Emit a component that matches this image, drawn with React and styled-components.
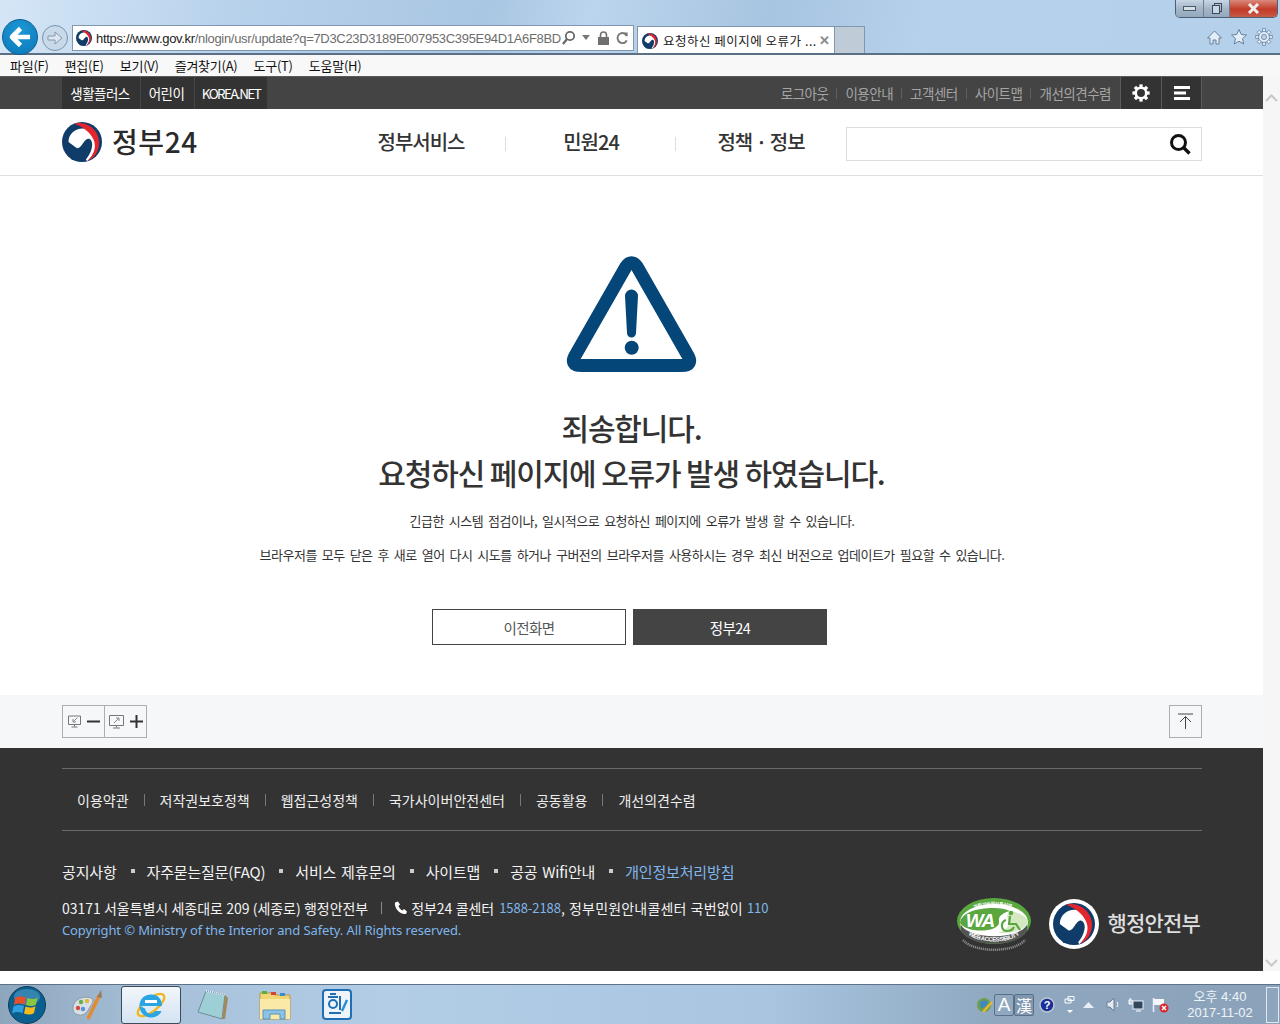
import React from 'react';
import styled, { createGlobalStyle } from 'styled-components';

const Global = createGlobalStyle`
  html, body { margin: 0; padding: 0; background: #fff; overflow: hidden; }
  #root { width: 1280px; height: 1024px; }
  * { box-sizing: border-box; }
  svg { flex: none; display: block; }
`;
const KR = `"Noto Sans CJK KR", "Noto Sans", sans-serif`;
const Shell = styled.div`width:1280px;height:1024px;display:flex;flex-direction:column;font-family:${KR};background:#fff;overflow:hidden;`;

const Chrome = styled.div`
  height:55px;flex:none;position:relative;display:flex;align-items:flex-end;padding:0 0 0 2px;
  background:linear-gradient(100deg,#d5e6f6 0%,#b8d2ec 18%,#a9c6e2 38%,#bcd5ee 46%,#a7c4e0 60%,#b6d1ec 72%,#b5d0eb 100%);
  border-bottom:2px solid #5b6f85;
`;
const BackBtn = styled.div`width:36px;height:36px;border-radius:50%;background:radial-gradient(circle at 50% 30%,#1e97d6,#0a78b8);border:1px solid #0a5f92;display:flex;align-items:center;justify-content:center;margin-bottom:-2px;`;
const ForwardBtn = styled.div`width:26px;height:26px;border-radius:50%;border:1px solid #7c93ab;background:#c8d9ea;display:flex;align-items:center;justify-content:center;margin:0 4px 2px 4px;`;
const AddressBar = styled.div`width:562px;height:26px;background:#fff;border:1px solid #8097ae;display:flex;align-items:center;padding:0 4px 0 3px;margin-bottom:2px;font-family:"Liberation Sans",sans-serif;font-size:13px;white-space:nowrap;`;
const UrlHost = styled.span`color:#222;margin-left:4px;letter-spacing:-.32px;`;
const UrlRest = styled.span`color:#6d6d6d;letter-spacing:-.32px;`;
const AddrIcons = styled.div`margin-left:auto;display:flex;align-items:center;gap:6px;`;
const Tab = styled.div`margin-left:3px;width:198px;height:27px;background:#fff;border:1px solid #8097ae;border-bottom:none;display:flex;align-items:center;padding:1px 4px 0 4px;font-size:12.5px;color:#222;white-space:nowrap;letter-spacing:.5px;`;
const TabLabel = styled.span`margin-left:5px;flex:1;`;
const TabClose = styled.span`color:#8a8a8a;font-weight:700;font-size:13px;font-family:"Liberation Sans",sans-serif;`;
const NewTab = styled.div`width:30px;height:27px;background:#c0cbd8;border:1px solid #8097ae;border-left:none;border-bottom:none;`;
const WinButtons = styled.div`position:absolute;top:0;right:2px;width:103px;height:18px;display:flex;border:1px solid #4d5f73;border-top:none;border-radius:0 0 5px 5px;overflow:hidden;`;
const WinBtn = styled.div`flex:${p=>p.$w};display:flex;align-items:center;justify-content:center;background:${p=>p.$red?'linear-gradient(#d98a7c,#c33a28 55%,#c65a48)':'linear-gradient(#c8d6e5,#a5b6c8 50%,#94a8bd)'};border-right:${p=>p.$red?'none':'1px solid #6a7d92'};`;
const ToolIcons = styled.div`position:absolute;right:7px;bottom:7px;display:flex;gap:7px;align-items:center;`;

const MenuBar = styled.div`height:21px;flex:none;background:#f8f8f8;display:flex;align-items:center;padding-left:10px;gap:16px;font-size:13px;color:#111;letter-spacing:-.25px;`;
const PageWrap = styled.div`flex:none;height:895px;display:flex;`;
const Page = styled.div`width:1263px;height:895px;display:flex;flex-direction:column;background:#fff;`;
const Scrollbar = styled.div`width:17px;background:#f6f6f6;display:flex;flex-direction:column;justify-content:space-between;align-items:center;padding:18px 0 4px;`;
const BottomStrip = styled.div`height:13px;flex:none;background:#fff;`;

const TopBar = styled.div`height:33px;flex:none;background:#444;border-top:1px solid #5a5a5a;display:flex;padding:0 61px 0 62px;`;
const FamilyNav = styled.div`display:flex;background:#333;`;
const FamilyItem = styled.a`width:${p=>p.$w}px;height:32px;display:flex;align-items:center;justify-content:center;padding-right:${p=>p.$tight?0:2}px;color:#fff;font-size:13.5px;letter-spacing:${p=>p.$tight?'-1.6px':'-.55px'};border-left:${p=>p.$first?'none':'1px solid #474747'};`;
const UtilNav = styled.div`margin-left:auto;display:flex;align-items:center;padding-right:9px;`;
const UtilLink = styled.a`color:#a4a4a4;font-size:13.5px;letter-spacing:-.5px;white-space:nowrap;display:flex;align-items:center;&+&::before{content:"";display:block;width:1px;height:11px;background:#5f5f5f;margin:0 8px;}`;
const IconCell = styled.div`width:41px;height:32px;background:#333;display:flex;align-items:center;justify-content:center;border-left:1px solid #5c5c5c;&:last-child{border-right:1px solid #5c5c5c;}`;

const Header = styled.div`height:67px;flex:none;display:flex;align-items:center;padding:0 61px 0 62px;border-bottom:1px solid #dfdfdf;`;
const Logo = styled.div`display:flex;align-items:center;width:274px;`;
const LogoText = styled.span`margin:-2px 0 0 10px;font-size:28px;font-weight:500;color:#2a2a2a;letter-spacing:.6px;line-height:1;`;
const GNav = styled.nav`display:flex;width:510px;margin-top:-2px;`;
const GNavItem = styled.a`flex:none;width:170px;display:flex;justify-content:center;font-size:20px;color:#333;letter-spacing:-1px;font-weight:500;position:relative;white-space:nowrap;&:not(:last-child)::after{content:"";position:absolute;right:0;top:10px;height:14px;width:1px;background:#ddd;}`;
const SearchBox = styled.div`margin-left:auto;width:356px;height:34px;border:1px solid #ddd;margin-top:3px;display:flex;align-items:center;justify-content:flex-end;padding-right:10px;`;

const Main = styled.main`height:519px;flex:none;display:flex;flex-direction:column;align-items:center;padding-top:80px;`;
const Title = styled.h1`margin:32px 0 0;text-align:center;font-size:30px;line-height:45px;font-weight:500;color:#333;letter-spacing:-1.15px;`;
const Desc = styled.p`margin:${p=>p.$mt}px 0 0 1px;font-size:13px;line-height:20px;color:#333;letter-spacing:-.5px;word-spacing:2.5px;white-space:nowrap;`;
const Buttons = styled.div`display:flex;gap:7px;margin:44px 4px 0 0;`;
const Btn = styled.a`width:194px;height:36px;display:flex;align-items:center;justify-content:center;font-size:14.5px;letter-spacing:-.6px;color:${p=>p.$dark?'#fff':'#555'};background:${p=>p.$dark?'#444':'#fff'};border:1px solid #444;`;

const ZoomRow = styled.div`height:53px;flex:none;background:#f6f7f9;padding:10px 61px 0 62px;display:flex;justify-content:space-between;align-items:flex-start;`;
const ZoomBox = styled.div`display:flex;width:85px;height:33px;border:1px solid #aeaeae;`;
const ZoomBtn = styled.div`flex:1;display:flex;align-items:center;justify-content:center;gap:6px;&+&{border-left:1px solid #aeaeae;}`;
const TopBtn = styled.div`width:33px;height:33px;border:1px solid #aeaeae;display:flex;align-items:center;justify-content:center;`;

const Footer = styled.footer`flex:1;background:#333;padding:20px 61px 0 62px;color:#fff;`;
const FootLinks = styled.div`height:63px;border-top:1px solid #6a6a6a;border-bottom:1px solid #6a6a6a;display:flex;align-items:center;padding-left:15px;`;
const FootLink = styled.a`font-size:14px;color:#eee;letter-spacing:0;white-space:nowrap;display:flex;align-items:center;&:not(:first-child)::before{content:"";display:inline-block;width:1px;height:12px;background:#777;margin:0 15px;}`;
const SubLinks = styled.div`display:flex;align-items:center;margin-top:28px;height:24px;font-size:15px;`;
const SubLink = styled.a`color:${p=>p.$blue?'#7fb6ec':'#f2f2f2'};letter-spacing:-.17px;word-spacing:1.7px;white-space:nowrap;display:flex;align-items:center;&:not(:first-child)::before{content:"";display:inline-block;width:4px;height:4px;background:#ccc;margin:0 12px 0 14px;}`;
const FootBottom = styled.div`display:flex;justify-content:space-between;`;
const Address = styled.div`font-size:14px;line-height:22px;color:#f2f2f2;padding-top:14px;white-space:nowrap;`;
const Line = styled.div`display:flex;align-items:center;letter-spacing:-.05px;word-spacing:.3px;`;
const Bar = styled.span`display:inline-block;width:1px;height:12px;background:#888;margin:0 12px 0 13px;`;
const CallText = styled.span`margin-left:3px;`;
const CenterText = styled.span`letter-spacing:.2px;word-spacing:.6px;`;
const Blue = styled.span`color:#7fb6ec;font-size:13px;margin-left:${p=>p.$ml}px;`;
const CopyLine = styled.div`color:#7fb6ec;letter-spacing:-.11px;font-family:"Noto Sans","Noto Sans CJK KR",sans-serif;font-size:13px;`;
const Marks = styled.div`display:flex;align-items:center;align-self:flex-start;margin-top:13px;padding-right:2px;`;
const MoisText = styled.span`font-size:21px;font-weight:500;color:#ddd;margin:-4px 0 0 8px;letter-spacing:-.8px;`;
const WAWrap = styled.div`margin-right:17px;margin-top:2px;`;

const Taskbar = styled.div`height:40px;flex:none;position:relative;display:flex;align-items:center;gap:2px;border-top:1px solid #5f7388;background:linear-gradient(90deg,#8ea6bc 0%,#a6c0d9 12%,#b3cde6 30%,#a9c5e0 60%,#8fa8c0 78%,#8aa2b9 100%);`;
const Start = styled.div`width:44px;display:flex;justify-content:center;margin:0 7px 0 5px;`;
const TaskIcon = styled.div`width:60px;height:38px;display:flex;align-items:center;justify-content:center;${p=>p.$active?'background:linear-gradient(#f2f6fb,#d4e3f2);border:1px solid #3d4a57;border-radius:3px;margin-left:1px;':''}`;
const Tray = styled.div`margin-left:auto;display:flex;align-items:center;height:100%;`;
const Clock = styled.div`width:92px;margin-left:5px;text-align:center;color:#eef3f8;font-size:13px;line-height:16px;font-family:"Liberation Sans","Noto Sans CJK KR",sans-serif;`;
const ShowDesk = styled.div`width:13px;height:36px;margin-right:1px;border:1px solid #dfe8f1;background:#8ea6bd;`;
const LangBtn = styled.div`width:20px;height:22px;display:flex;align-items:center;justify-content:center;color:#fff;font-size:${p=>p.$s}px;border:1px solid #5b7086;background:${p=>p.$active?'#90a9c0':'#7f98b0'};border-radius:2px;font-family:"Liberation Sans","Noto Sans CJK KR",sans-serif;`;
const TrayIcon = styled.span`display:flex;margin-left:${p=>p.$ml}px;`;

const GovLogo = ({ s = 40, ring }) => (
  <svg width={s} height={s} viewBox="0 0 40 40" aria-hidden="true">
    {ring && <circle cx="20" cy="20" r="20" fill="#fff" />}
    <g transform={ring ? 'translate(3.2 3.2) scale(.84)' : undefined}>
      <circle cx="20" cy="20" r="20" fill="#0f3c68" />
      <path d="M6.500 20 C6.500 12 13 6.500 20.500 6.500 C28 6.500 34.500 12.500 34.500 20 C34.500 28 30.500 34.500 25 39.200 L20 30 Z" fill="#fff" />
      <path d="M12 1.700 A20 20 0 0 1 25.500 39.200 C31.500 33 35 25 31.500 17.500 C28 10 21 4.500 12 1.700Z" fill="#e3262e" />
      <path d="M6.300 21 C8 27 15 28.500 19 24 C22 20 24 15.800 27 16.800 C30 17.800 30.800 22 29.800 26 C28.800 31 26 35 23 38.500 L10 38 L3 28 Z" fill="#0f3c68" />
    </g>
  </svg>
);
const WALogo = () => (
  <svg width="76" height="54" viewBox="0 0 76 54" aria-hidden="true">
    <defs>
      <path id="waTop" d="M12 16 C20 5 56 5 64 16" />
      <path id="waBottom" d="M12 36 C22 46 54 46 64 36" />
    </defs>
    <path d="M7 42 C18 55 58 55 69 42" fill="none" stroke="#8a8a8a" strokeWidth="2.500" strokeDasharray="1.200 .8" />
    <ellipse cx="38" cy="23" rx="37" ry="23" fill="#5aa63f" />
    <ellipse cx="38" cy="24" rx="34" ry="18" fill="#fff" />
    <path d="M4 25 C5 15 20 10 38 10 C44 10 50 11 54 13 C46 15 42 19 43 23 C44 28 38 31 32 32 C20 34 8 31 4 25Z" fill="#5aa63f" />
    <path d="M56 13 C66 16 72 20 72 25 C68 32 56 36 42 35 C52 31 56 25 52 21 C50 17 52 14 56 13Z" fill="#d4e9c2" />
    <path d="M5 27 C14 42 62 42 71 27 L71 33 C62 50 14 50 5 33Z" fill="#555" />
    <text fontFamily="Noto Sans CJK KR" fontSize="5" fontWeight="700" fill="#fff"><textPath href="#waTop" startOffset="14%" textLength="38">과학기술정보통신부</textPath></text>
    <text x="24" y="29" fontFamily="Liberation Sans" fontWeight="700" fontStyle="italic" fontSize="19" fill="#fff" textAnchor="middle" letterSpacing="-1">WA</text>
    <circle cx="55" cy="15" r="2.300" fill="#5aa63f" />
    <path d="M54 18 L53 26 L60 26 L64 32 M50 22 C44 24 45 33 51 33 C55 33 57 31 58 29" fill="none" stroke="#5aa63f" strokeWidth="2.200" />
    <text fontFamily="Liberation Sans" fontSize="6" fontWeight="700" fill="#fff"><textPath href="#waBottom" startOffset="1%" textLength="54">WEB ACCESSIBILITY</textPath></text>
  </svg>
);
const Gear = ({ s = 18, c = '#fff', sw = 3.4 }) => (
  <svg width={s} height={s} viewBox="0 0 24 24" aria-hidden="true">
    <circle cx="12" cy="12" r="7" fill="none" stroke={c} strokeWidth={sw} />
    {[0,45,90,135,180,225,270,315].map(a => <rect key={a} x="9.800" y="0.500" width="4.400" height="4" fill={c} transform={`rotate(${a} 12 12)`} />)}
  </svg>
);

export default function App() {
  return (
    <Shell>
      <Global />
      <Chrome>
        <BackBtn>
          <svg width="24" height="24" viewBox="0 0 24 24" aria-hidden="true"><path d="M22 12H5M12.500 3.500L4 12l8.500 8.500" fill="none" stroke="#fff" strokeWidth="4.600" strokeLinejoin="round" /></svg>
        </BackBtn>
        <ForwardBtn>
          <svg width="18" height="18" viewBox="0 0 18 18" aria-hidden="true"><path d="M2 7h7V3l7 6-7 6v-4H2z" fill="#dce7f2" stroke="#8398ad" /></svg>
        </ForwardBtn>
        <AddressBar>
          <GovLogo s={16} />
          <UrlHost>https://www.gov.kr</UrlHost>
          <UrlRest>/nlogin/usr/update?q=7D3C23D3189E007953C395E94D1A6F8BD</UrlRest>
          <AddrIcons>
            <svg width="15" height="16" viewBox="0 0 15 16" aria-hidden="true"><circle cx="9" cy="6" r="4.200" fill="none" stroke="#666" strokeWidth="1.800" /><path d="M6 9l-4 5" stroke="#666" strokeWidth="2.200" /></svg>
            <svg width="9" height="6" viewBox="0 0 9 6" aria-hidden="true"><path d="M0 0h8L4 5z" fill="#777" /></svg>
            <svg width="13" height="15" viewBox="0 0 13 15" aria-hidden="true"><rect x="1" y="6" width="11" height="8" fill="#6f6f6f" /><path d="M3.500 6V4a3 3 0 016 0v2" fill="none" stroke="#6f6f6f" strokeWidth="1.600" /></svg>
            <svg width="13" height="14" viewBox="0 0 14 14" aria-hidden="true"><path d="M11.500 5A5 5 0 102 8.500a5 5 0 009.500 1" fill="none" stroke="#777" strokeWidth="2" /><path d="M8 1l4.500 0v4.500z" fill="#777" /></svg>
          </AddrIcons>
        </AddressBar>
        <Tab>
          <GovLogo s={16} />
          <TabLabel>요청하신 페이지에 오류가 ...</TabLabel>
          <TabClose>✕</TabClose>
        </Tab>
        <NewTab />
        <WinButtons>
          <WinBtn $w={28}><svg width="13" height="6" viewBox="0 0 13 6" aria-hidden="true"><rect x=".5" y=".5" width="12" height="4" fill="#d6dfe8" stroke="#4b5a69" /></svg></WinBtn>
          <WinBtn $w={26}><svg width="10" height="11" viewBox="0 0 10 11" aria-hidden="true"><rect x="2.500" y=".5" width="7" height="8" fill="none" stroke="#39485a" /><rect x=".5" y="2.500" width="7" height="8" fill="#c8d6e5" stroke="#39485a" /></svg></WinBtn>
          <WinBtn $w={48} $red><svg width="13" height="11" viewBox="0 0 13 11" aria-hidden="true"><path d="M2 1l9 9M11 1l-9 9" stroke="#eee" strokeWidth="3" /></svg></WinBtn>
        </WinButtons>
        <ToolIcons>
          <svg width="17" height="17" viewBox="0 0 17 17" aria-hidden="true"><path d="M8.500 2L1.500 9h2.500v6h3v-4h3v4h3V9h2.500z" fill="#e4eef8" stroke="#66809a" /></svg>
          <svg width="18" height="18" viewBox="0 0 18 18" aria-hidden="true"><path d="M9 1.500l2.300 5 5.200.5-4 3.600 1.200 5.400L9 13.200 4.300 16l1.200-5.400-4-3.600 5.200-.5z" fill="#e4eef8" stroke="#66809a" /></svg>
          <svg width="18" height="18" viewBox="0 0 24 24" aria-hidden="true">
            <circle cx="12" cy="12" r="7.500" fill="#e4eef8" stroke="#66809a" />
            <circle cx="12" cy="12" r="3.500" fill="#b5d0eb" stroke="#66809a" />
            {[0,45,90,135,180,225,270,315].map(a => <rect key={a} x="10" y="1" width="4" height="4" fill="#e4eef8" stroke="#66809a" transform={`rotate(${a} 12 12)`} />)}
          </svg>
        </ToolIcons>
      </Chrome>
      <MenuBar>
        {['파일(F)','편집(E)','보기(V)','즐겨찾기(A)','도구(T)','도움말(H)'].map(m => <span key={m}>{m}</span>)}
      </MenuBar>
      <PageWrap>
        <Page>
          <TopBar>
            <FamilyNav>
              <FamilyItem $first $w={78}>생활플러스</FamilyItem>
              <FamilyItem $w={54}>어린이</FamilyItem>
              <FamilyItem $w={73} $tight>KOREA.NET</FamilyItem>
            </FamilyNav>
            <UtilNav>
              {['로그아웃','이용안내','고객센터','사이트맵','개선의견수렴'].map(t => <UtilLink key={t}>{t}</UtilLink>)}
            </UtilNav>
            <IconCell><Gear /></IconCell>
            <IconCell>
              <svg width="16" height="14" viewBox="0 0 16 14" aria-hidden="true"><path d="M0 0h16v3H0zM0 5.500h12v3H0zM0 11h16v3H0z" fill="#fff" /></svg>
            </IconCell>
          </TopBar>
          <Header>
            <Logo>
              <GovLogo s={40} />
              <LogoText>정부24</LogoText>
            </Logo>
            <GNav>
              <GNavItem>정부서비스</GNavItem>
              <GNavItem>민원24</GNavItem>
              <GNavItem>정책 · 정보</GNavItem>
            </GNav>
            <SearchBox>
              <svg width="22" height="22" viewBox="0 0 22 22" aria-hidden="true"><circle cx="9.500" cy="9.500" r="7" fill="none" stroke="#111" strokeWidth="3" /><path d="M14.500 14.500l6 6" stroke="#111" strokeWidth="3.400" /></svg>
            </SearchBox>
          </Header>
          <Main>
            <svg width="131" height="117" viewBox="0 0 131 117" aria-hidden="true">
              <path d="M60 10.500 Q65.500 3 71 10.500 L121 98 Q128.500 109.600 115 109.600 H16 Q2.500 109.600 10 98 Z" fill="none" stroke="#044677" strokeWidth="13" strokeLinejoin="round" />
              <path d="M59 40 a6.500 6.500 0 0113 0 L70 77 a4.500 4.500 0 01-9 0z" fill="#044677" />
              <circle cx="65.700" cy="91.700" r="7" fill="#044677" />
            </svg>
            <Title>죄송합니다.<br />요청하신 페이지에 오류가 발생 하였습니다.</Title>
            <Desc $mt={16}>긴급한 시스템 점검이나, 일시적으로 요청하신 페이지에 오류가 발생 할 수 있습니다.</Desc>
            <Desc $mt={14}>브라우저를 모두 닫은 후 새로 열어 다시 시도를 하거나 구버전의 브라우저를 사용하시는 경우 최신 버전으로 업데이트가 필요할 수 있습니다.</Desc>
            <Buttons>
              <Btn>이전화면</Btn>
              <Btn $dark>정부24</Btn>
            </Buttons>
          </Main>
          <ZoomRow>
            <ZoomBox>
              <ZoomBtn>
                <svg width="13" height="13" viewBox="0 0 13 13" aria-hidden="true"><path d="M.5 1h12v8.500H.5zM6.500 9.500v2M3.500 12h6" fill="none" stroke="#777" /><path d="M9.500 2.500L5 7M5 4v3h3" fill="none" stroke="#888" /></svg>
                <svg width="13" height="3" viewBox="0 0 13 3" aria-hidden="true"><rect width="13" height="2" y=".5" fill="#333" /></svg>
              </ZoomBtn>
              <ZoomBtn>
                <svg width="15" height="14" viewBox="0 0 15 14" aria-hidden="true"><path d="M.5 .5h14v10H.5zM7.500 10.500v2M4 13h7" fill="none" stroke="#777" /><path d="M5 8l5-5M7 3h3v3" fill="none" stroke="#888" /></svg>
                <svg width="13" height="13" viewBox="0 0 13 13" aria-hidden="true"><path d="M0 5.500h13v2H0zM5.500 0h2v13h-2z" fill="#333" /></svg>
              </ZoomBtn>
            </ZoomBox>
            <TopBtn>
              <svg width="17" height="17" viewBox="0 0 17 17" aria-hidden="true"><path d="M1 1h15M8.500 16V3.500M3 9l5.500-5.500L14 9" fill="none" stroke="#444" /></svg>
            </TopBtn>
          </ZoomRow>
          <Footer>
            <FootLinks>
              {['이용약관','저작권보호정책','웹접근성정책','국가사이버안전센터','공동활용','개선의견수렴'].map(t => <FootLink key={t}>{t}</FootLink>)}
            </FootLinks>
            <SubLinks>
              <SubLink>공지사항</SubLink>
              <SubLink>자주묻는질문(FAQ)</SubLink>
              <SubLink>서비스 제휴문의</SubLink>
              <SubLink>사이트맵</SubLink>
              <SubLink>공공 Wifi안내</SubLink>
              <SubLink $blue>개인정보처리방침</SubLink>
            </SubLinks>
            <FootBottom>
              <Address>
                <Line>
                  <span>03171 서울특별시 세종대로 209 (세종로) 행정안전부</span>
                  <Bar />
                  <svg width="14" height="14" viewBox="0 0 14 14" aria-hidden="true"><path d="M1 1.500l3-1 2 3-1.500 1.500c.5 1.800 2 3.600 4 4.500L10 8l3 2.500-1 2.500C6 14 0 7 1 1.500z" fill="#fff" /></svg>
                  <CallText>정부24 콜센터</CallText>
                  <Blue $ml={5}>1588-2188</Blue>
                  <CenterText>, 정부민원안내콜센터 국번없이</CenterText>
                  <Blue $ml={4}>110</Blue>
                </Line>
                <CopyLine>Copyright © Ministry of the Interior and Safety. All Rights reserved.</CopyLine>
              </Address>
              <Marks>
                <WAWrap><WALogo /></WAWrap>
                <GovLogo s={50} ring />
                <MoisText>행정안전부</MoisText>
              </Marks>
            </FootBottom>
          </Footer>
        </Page>
        <Scrollbar>
          <svg width="13" height="8" viewBox="0 0 13 8" aria-hidden="true"><path d="M1 7l5.500-5.500L12 7" fill="none" stroke="#c8c8c8" strokeWidth="2" /></svg>
          <svg width="13" height="8" viewBox="0 0 13 8" aria-hidden="true"><path d="M1 1l5.500 5.500L12 1" fill="none" stroke="#c8c8c8" strokeWidth="2" /></svg>
        </Scrollbar>
      </PageWrap>
      <BottomStrip />
      <Taskbar>
        <Start>
          <svg width="38" height="38" viewBox="0 0 38 38" aria-hidden="true">
            <circle cx="19" cy="19" r="18.500" fill="#0b5f8f" stroke="#123c5a" />
            <ellipse cx="19" cy="11" rx="13" ry="8" fill="#5fa8cf" opacity=".5" />
            <path d="M7 12c3-2 7-2 11-.5l-1.500 7c-4-1.500-7.500-1.500-10.500.5z" fill="#e5502b" />
            <path d="M19.500 12c4 1.500 7 1.500 10-.5l-1.500 7c-3 2-6.500 2-10 .5z" fill="#8cc63f" />
            <path d="M5.500 20.500c3-2 7-2 10.500-.5l-1.500 7c-4-1.500-7.500-1.500-10.500.5z" fill="#2f9fe0" />
            <path d="M17.500 20.500c3.500 1.500 7 1.500 10-.5L26 27c-3 2-6.500 2-10 .5z" fill="#f6b91c" />
          </svg>
        </Start>
        <TaskIcon>
          <svg width="34" height="34" viewBox="0 0 34 34" aria-hidden="true"><path d="M2 20c0-8 10-13 18-10 4 2 1 6-1 9-3 6-7 9-11 8-4-1-6-3-6-7z" fill="#d8e0e6" stroke="#8d9aa8" /><circle cx="7" cy="20" r="2.200" fill="#d9483b" /><circle cx="10" cy="14" r="2.200" fill="#62b04a" /><circle cx="16" cy="13" r="2.200" fill="#e5b73b" /><circle cx="12" cy="21" r="2.200" fill="#5a93d8" /><path d="M17 31L28 8" stroke="#e58a2c" strokeWidth="3.400" /><path d="M26 9l4-7 1 8z" fill="#9a7a5a" /></svg>
        </TaskIcon>
        <TaskIcon $active>
          <svg width="34" height="34" viewBox="0 0 34 34" aria-hidden="true"><ellipse cx="17" cy="17" rx="16" ry="6.500" transform="rotate(-38 17 17)" fill="none" stroke="#f0b81f" strokeWidth="2.400" /><path d="M6 18h22c0-7-4-11.500-11-11.500S5 12 5.500 18.500C6 25 11 29.500 17 29.500c5 0 9-2.500 10.500-6.500h-6.500c-1 1.500-2.500 2.500-4.500 2.500-3 0-5-2-5.500-5z" fill="#2aa5e3" /><rect x="11" y="12" width="12" height="3" fill="#fff" /></svg>
        </TaskIcon>
        <TaskIcon>
          <svg width="34" height="34" viewBox="0 0 34 34" aria-hidden="true"><path d="M10 3l19 4-3 24L2 24z" fill="#9fcfd6" stroke="#6c8d95" /><path d="M29 7l3 3-3 21-3 0z" fill="#a08a5d" /><path d="M10 3l19 4" stroke="#eef" strokeWidth="2" strokeDasharray="1 1" /></svg>
        </TaskIcon>
        <TaskIcon>
          <svg width="34" height="33" viewBox="0 0 34 33" aria-hidden="true"><path d="M2 5h13l2 2h15v24H2z" fill="#f2d676" stroke="#b89a45" /><rect x="4" y="3" width="5" height="3" fill="#5cae3e" /><rect x="13" y="4" width="5" height="3" fill="#cf4433" /><rect x="22" y="5" width="5" height="3" fill="#3d8ad2" /><path d="M2 11h30v20H2z" fill="#fbe9a8" /><path d="M5 31V22h22v9h-5v-5H12v5z" fill="#8cc2e6" stroke="#5b93b8" /></svg>
        </TaskIcon>
        <TaskIcon>
          <svg width="30" height="32" viewBox="0 0 30 32" aria-hidden="true"><rect x="1" y="1" width="28" height="29" rx="3" fill="#eef4fa" stroke="#1f6fb5" strokeWidth="2" /><circle cx="11" cy="15" r="4" fill="none" stroke="#1f6fb5" strokeWidth="2" /><path d="M6 8h10M8 5h6M18 7v14M7 24h12" stroke="#1f6fb5" strokeWidth="2" fill="none" /><path d="M20 22l5-11" stroke="#2a8fd6" strokeWidth="2.500" /></svg>
        </TaskIcon>
        <Tray>
          <svg width="18" height="18" viewBox="0 0 18 18" aria-hidden="true"><circle cx="8" cy="9" r="7" fill="#6aa04c" /><path d="M4 6c3-2 6-2 8 0-1 3-4 6-7 6z" fill="#3f86c9" /><path d="M7 16l9-10" stroke="#e7b73a" strokeWidth="2.500" /></svg>
          <LangBtn $active $s={19}>A</LangBtn>
          <LangBtn $s={16}>漢</LangBtn>
          <TrayIcon $ml={5}><svg width="16" height="16" viewBox="0 0 16 16" aria-hidden="true"><circle cx="8" cy="8" r="7" fill="#1b2f9c" stroke="#bcc6d0" strokeWidth="1.500" /><text x="8" y="12" textAnchor="middle" fill="#fff" fontSize="11" fontWeight="700" fontFamily="Liberation Sans">?</text></svg></TrayIcon>
          <TrayIcon $ml={9}><svg width="12" height="18" viewBox="0 0 12 18" aria-hidden="true"><path d="M4 .5h6v4H4zM1 3h6v4H1z" fill="none" stroke="#fff" /><path d="M3 14h6l-3 3z" fill="#fff" /></svg></TrayIcon>
          <TrayIcon $ml={7}><svg width="11" height="6" viewBox="0 0 11 6" aria-hidden="true"><path d="M0 6L5.500 0 11 6z" fill="#e8eef4" /></svg></TrayIcon>
          <TrayIcon $ml={12}><svg width="14" height="15" viewBox="0 0 14 15" aria-hidden="true"><path d="M1 5h3l4-4v13l-4-4H1z" fill="#e4ebf2" stroke="#6b7f93" /><path d="M11 5c1 1.500 1 3.500 0 5" stroke="#fff" fill="none" /></svg></TrayIcon>
          <TrayIcon $ml={8}><svg width="16" height="16" viewBox="0 0 16 16" aria-hidden="true"><rect x="5" y="4" width="10" height="8" fill="#33475b" stroke="#eef" /><path d="M8 14h5M2 1v6M1 3h3v4H1z" stroke="#fff" fill="none" /></svg></TrayIcon>
          <TrayIcon $ml={8}><svg width="17" height="16" viewBox="0 0 17 16" aria-hidden="true"><path d="M1.500 1v14" stroke="#eef" strokeWidth="1.500" /><path d="M2 2h10v6H2z" fill="#f4f6f8" /><circle cx="12" cy="11" r="4.500" fill="#d9292c" /><path d="M10 9l4 4M14 9l-4 4" stroke="#fff" strokeWidth="1.500" /></svg></TrayIcon>
          <Clock>오후 4:40<br />2017-11-02</Clock>
          <ShowDesk />
        </Tray>
      </Taskbar>
    </Shell>
  );
}
